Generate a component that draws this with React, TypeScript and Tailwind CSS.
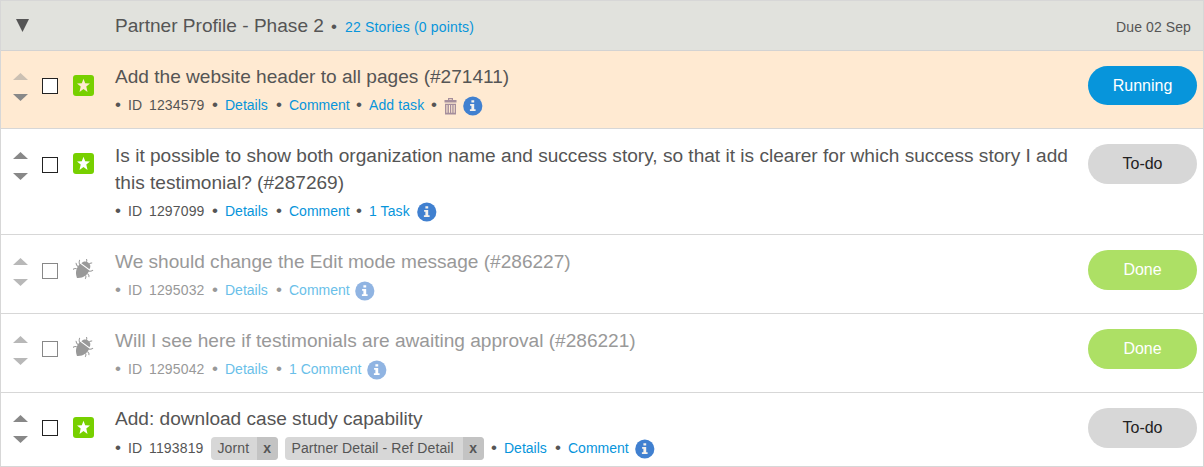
import type { ReactNode } from 'react';

type Status = 'Running' | 'To-do' | 'Done';

const statusStyle: Record<Status, string> = {
  Running: 'bg-[#0795db] text-white h-[39px]',
  'To-do': 'bg-[#d7d7d7] text-[#222222] h-10',
  Done: 'bg-[#ade065] text-white h-10',
};

function Arrows({ className, muted, firstMuted }: { className: string; muted?: boolean; firstMuted?: boolean }) {
  const color = muted ? '#b8b8b8' : '#888888';
  return (
    <div className={`flex w-[15px] flex-col justify-between ${className}`}>
      <svg width="15" height="7" viewBox="0 0 15 7">
        <path d="M0 7L7.5 0L15 7Z" fill={firstMuted ? '#cbc0b3' : color} />
      </svg>
      <svg width="15" height="7" viewBox="0 0 15 7">
        <path d="M0 0L7.5 7L15 0Z" fill={color} />
      </svg>
    </div>
  );
}

function Star({ fill = '#ffffff' }: { fill?: string }) {
  return (
    <svg width="21" height="21" viewBox="0 0 21 21">
      <rect x="0" y="0" width="21" height="21" rx="3" fill="#77d000" />
      <path d="M10.5 3.8L12.2 8.2L17 8.5L13.3 11.6L14.5 16.9L10.5 14L6.5 16.9L7.7 11.6L4 8.5L8.8 8.2Z" fill={fill} />
    </svg>
  );
}

function Bug() {
  return (
    <svg width="21" height="21" viewBox="0 0 21 21" fill="none">
      <g transform="translate(10.8 9.5) rotate(36)">
        <path d="M-5.6 -1.7H5.6C6.8 3 5 8.6 0 11.6C-5 8.6 -6.8 3 -5.6 -1.7Z" fill="#999999" />
        <path d="M-5 -2.8C-4.9 -5.7 -2.8 -7.4 0 -7.4C2.8 -7.4 4.9 -5.7 5 -2.8Z" fill="#999999" />
        <g stroke="#999999" strokeWidth="1">
          <path d="M-1.7 -7C-2 -8.2 -2.6 -8.8 -3.6 -9.3M1.7 -7C2 -8.2 2.6 -8.8 3.6 -9.3" />
          <path d="M-5.5 -0.8C-7 -1.3 -7.9 -2.6 -8.4 -4.6M-6 1.9C-7.7 1.7 -8.8 1.3 -9.6 0M-5.6 4.4C-7.2 5 -8 5.9 -8.2 7.4" />
          <path d="M5.5 -0.8C7 -1.3 7.9 -2.6 8.4 -4.2M6 1.9C7.7 1.9 8.8 2.4 9.2 4M5.4 4.4C6.8 5 7.3 6 7.2 7.6" />
        </g>
      </g>
    </svg>
  );
}

function Info({ muted }: { muted?: boolean }) {
  return (
    <svg className="shrink-0" width="20" height="20" viewBox="0 0 20 20">
      <circle cx="9.8" cy="10" r="9.6" fill={muted ? '#90b4e2' : '#4080d0'} />
      <path d="M8.4 4.3H11.2V6.6H8.4ZM7.1 8H11.2V13.2H12.6V15H6.9V13.2H8.4V9.7H7.1Z" fill={muted ? '#ffffff' : '#f4f1ed'} />
    </svg>
  );
}

function Trash() {
  return (
    <svg className="mt-[2px] shrink-0" width="13" height="17" viewBox="0 0 13 17" fill="#a58e9c">
      <path d="M4 0H9V2H12.5V4.5H0.5V2H4ZM5.2 1.2V2H7.8V1.2Z" fillRule="evenodd" />
      <path d="M1 5.7H12V16.5H1ZM2.4 7V14.7H3.5V7ZM4.9 7V14.7H6V7ZM7.2 7V14.7H8.3V7ZM9.6 7V14.7H10.7V7Z" fillRule="evenodd" />
    </svg>
  );
}

function Dot({ className = 'w-[13px]' }: { className?: string }) {
  return <span className={`shrink-0 text-[17px] ${className}`}>•</span>;
}

function Tag({ label, className }: { label: string; className: string }) {
  return (
    <span className={`flex h-[23px] shrink-0 overflow-hidden rounded-[4px] bg-[#d7d7d7] leading-[23px] ${className}`}>
      <span className="flex-1 pl-[6.5px] tracking-[0.1px]">{label}</span>
      <span className="w-[21.5px] bg-[#c3c3c3] text-center font-bold">x</span>
    </span>
  );
}

function Link({ children, className = '', muted }: { children: ReactNode; className?: string; muted?: boolean }) {
  return (
    <a className={`shrink-0 ${muted ? 'text-[#6abfe9]' : 'text-[#0795db]'} ${className}`}>{children}</a>
  );
}

interface RowProps {
  title: string;
  id: string;
  status: Status;
  height: string;
  arrows: string;
  check: string;
  icon: string;
  titleTop: string;
  metaTop?: string;
  highlight?: boolean;
  children: ReactNode;
}

function Row({ title, id, status, height, arrows, check, icon, titleTop, metaTop = '', highlight, children }: RowProps) {
  const muted = status === 'Done';
  return (
    <section className={`flex items-start border-b border-[#d7d7d7] ${height} ${highlight ? 'bg-[#ffead2]' : 'bg-white'}`}>
      <div className="w-[41px] shrink-0 pl-3">
        <Arrows className={arrows} muted={muted} firstMuted={highlight} />
      </div>
      <div className={`size-4 shrink-0 border bg-white ${muted ? 'border-[#888888]' : 'border-[#222222]'} ${check}`} />
      <div className={`ml-[15px] w-[42px] shrink-0 ${icon}`}>
        {muted ? <Bug /> : <Star fill={highlight ? '#ffead2' : '#ffffff'} />}
      </div>
      <div className={`w-[973px] shrink-0 ${muted ? 'text-[#999999]' : 'text-[#555555]'} ${titleTop}`}>
        <h2 className="w-[960px] text-[19.09px] leading-[27px]">{title}</h2>
        <div className={`flex h-[30px] items-center whitespace-nowrap text-[14px] leading-[30px] ${metaTop}`}>
          <Dot />
          <span className="w-[21px] shrink-0">ID</span>
          <span className="w-[63px] shrink-0 tracking-[0.15px]">{id}</span>
          {children}
        </div>
      </div>
      <button className={`mt-[15px] w-[109px] shrink-0 rounded-full text-[16px] ${statusStyle[status]}`}>{status}</button>
    </section>
  );
}

export default function App() {
  return (
    <main className="h-[467px] w-[1204px] border-x border-t border-[#d7d7d7] font-['Liberation_Sans',Arial,sans-serif]">
      <header className="flex h-[50px] items-center border-b border-[#d3d3d3] bg-[#e1e2dd] text-[#555555]">
        <div className="w-[114px] pl-[15px]">
          <svg width="13" height="13" viewBox="0 0 13 13"><path d="M0 0H13L6.5 13Z" fill="#555555" /></svg>
        </div>
        <h1 className="w-[216px] pt-[2px] text-[19.09px]">Partner Profile - Phase 2</h1>
        <Dot className="w-[14px] pt-[3px]" />
        <Link className="pt-1 text-[14px] tracking-[0.18px]">22 Stories (0 points)</Link>
        <span className="ml-auto pr-3 pt-1 text-[14px] tracking-[0.1px]">Due 02 Sep</span>
      </header>

      <Row title="Add the website header to all pages (#271411)" id="1234579" status="Running" highlight
        height="h-[78px]" arrows="mt-[22px] h-7" check="mt-[27px]" icon="mt-6" titleTop="pt-[12px]">
        <Dot />
        <Link className="w-[51px]">Details</Link>
        <Dot />
        <Link className="w-[67px]">Comment</Link>
        <Dot />
        <Link className="w-[62px] tracking-[0.1px]">Add task</Link>
        <Dot />
        <Trash />
        <span className="ml-[6px] mt-[2px]"><Info /></span>
      </Row>

      <Row title="Is it possible to show both organization name and success story, so that it is clearer for which success story I add this testimonial? (#287269)" id="1297099" status="To-do"
        height="h-[106px]" arrows="mt-[23px] h-7" check="mt-7" icon="mt-6" titleTop="pt-[13px]">
        <Dot />
        <Link className="w-[51px]">Details</Link>
        <Dot />
        <Link className="w-[67px]">Comment</Link>
        <Dot />
        <Link className="w-[48px] tracking-[0.1px]">1 Task</Link>
        <span className="mt-[2px]"><Info /></span>
      </Row>

      <Row title="We should change the Edit mode message (#286227)" id="1295032" status="Done"
        height="h-[79px]" arrows="mt-[23px] h-7" check="mt-7" icon="mt-6" titleTop="pt-[13px]">
        <Dot />
        <Link muted className="w-[51px]">Details</Link>
        <Dot />
        <Link muted className="w-[66px]">Comment</Link>
        <span className="mt-[2px]"><Info muted /></span>
      </Row>

      <Row title="Will I see here if testimonials are awaiting approval (#286221)" id="1295042" status="Done"
        height="h-[79px]" arrows="mt-[22px] h-[29px]" check="mt-[27px]" icon="mt-[23px]" titleTop="pt-[13px]">
        <Dot />
        <Link muted className="w-[51px]">Details</Link>
        <Dot />
        <Link muted className="w-[78px]">1 Comment</Link>
        <span className="mt-[2px]"><Info muted /></span>
      </Row>

      <Row title="Add: download case study capability" id="1193819" status="To-do"
        height="h-[74px]" arrows="mt-[22px] h-7" check="mt-[27px]" icon="mt-6" titleTop="pt-[12px]" metaTop="mt-px">
        <Tag label="Jornt" className="-ml-px mr-[7px] w-[67px]" />
        <Tag label="Partner Detail - Ref Detail" className="mr-[7px] w-[199px]" />
        <Dot />
        <Link className="w-[51px]">Details</Link>
        <Dot />
        <Link className="w-[67px]">Comment</Link>
        <span className="mt-[2px]"><Info /></span>
      </Row>
    </main>
  );
}
